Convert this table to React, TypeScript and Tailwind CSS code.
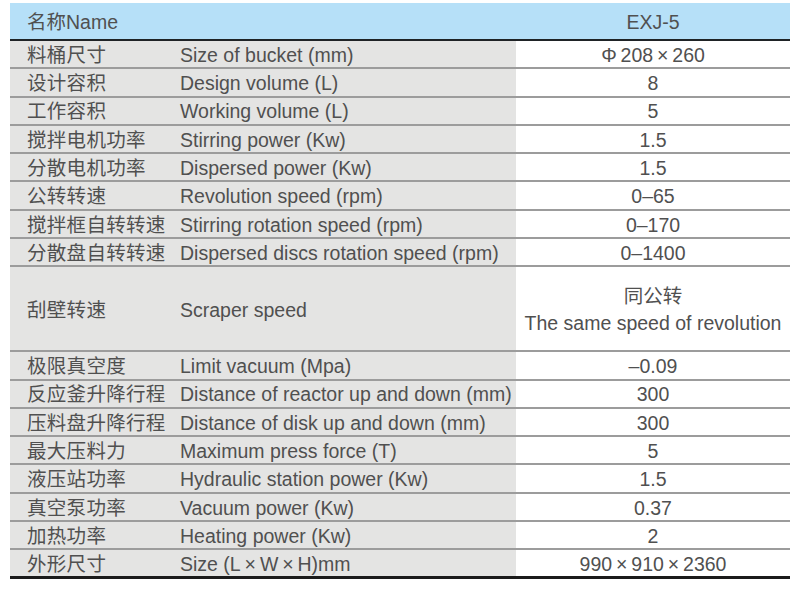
const x = '\u2009×\u2009';

const rows: { zh: string; en: string; value: string; tall?: boolean; value2?: string }[] = [
  { zh: '料桶尺寸', en: 'Size of bucket (mm)', value: `Φ\u2009208${x}260` },
  { zh: '设计容积', en: 'Design volume (L)', value: '8' },
  { zh: '工作容积', en: 'Working volume (L)', value: '5' },
  { zh: '搅拌电机功率', en: 'Stirring power (Kw)', value: '1.5' },
  { zh: '分散电机功率', en: 'Dispersed power (Kw)', value: '1.5' },
  { zh: '公转转速', en: 'Revolution speed (rpm)', value: '0–65' },
  { zh: '搅拌框自转转速', en: 'Stirring rotation speed (rpm)', value: '0–170' },
  { zh: '分散盘自转转速', en: 'Dispersed discs rotation speed (rpm)', value: '0–1400' },
  { zh: '刮壁转速', en: 'Scraper speed', value: '同公转', value2: 'The same speed of revolution', tall: true },
  { zh: '极限真空度', en: 'Limit vacuum (Mpa)', value: '–0.09' },
  { zh: '反应釜升降行程', en: 'Distance of reactor up and down (mm)', value: '300' },
  { zh: '压料盘升降行程', en: 'Distance of disk up and down (mm)', value: '300' },
  { zh: '最大压料力', en: 'Maximum press force (T)', value: '5' },
  { zh: '液压站功率', en: 'Hydraulic station power (Kw)', value: '1.5' },
  { zh: '真空泵功率', en: 'Vacuum power (Kw)', value: '0.37' },
  { zh: '加热功率', en: 'Heating power (Kw)', value: '2' },
  { zh: '外形尺寸', en: `Size (L${x}W${x}H)mm`, value: `990${x}910${x}2360` },
];

export default function App() {
  return (
    <div
      className="h-[592px] w-[800px] bg-white px-[10px] pt-[3px] text-[19.5px] leading-none text-[#505050]"
      style={{ fontFamily: '"Liberation Sans", Arial, "Noto Sans CJK SC", sans-serif' }}
    >
      <div className="flex h-[38px] items-center border-b-[2.5px] border-[#1f2326] bg-[#b6e0f8] pt-[3px]">
        <div className="w-[506px] pl-[17px]">名称Name</div>
        <div className="flex-1 text-center">EXJ-5</div>
      </div>
      {rows.map((row, i) => (
        <div
          key={row.zh}
          className={`flex items-stretch ${row.tall ? 'h-[84.9px]' : 'h-[28.3px]'} ${
            i === rows.length - 1 ? 'border-b-[3px] border-[#1b1b1b]' : 'border-b-2 border-[#9c9c9c]'
          }`}
        >
          <div className="flex w-[506px] items-center bg-[#e4e4e3] pt-[3px]">
            <div className="w-[170px] pl-[17px] tracking-[0.3px]">{row.zh}</div>
            <div>{row.en}</div>
          </div>
          <div className="flex flex-1 flex-col items-center justify-center bg-white pt-[3px]">
            <div>{row.value}</div>
            {row.value2 && <div className="mt-[8px]">{row.value2}</div>}
          </div>
        </div>
      ))}
    </div>
  );
}
